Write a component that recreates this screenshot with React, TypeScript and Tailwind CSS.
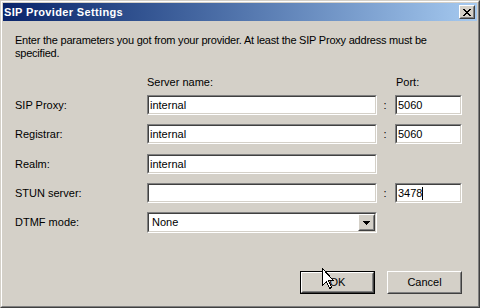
import type { ReactNode } from 'react';

const font = { fontFamily: '"Liberation Sans", Arial, sans-serif' };

function Sunken({ children, className = '' }: { children?: ReactNode; className?: string }) {
  return (
    <div className={`border border-t-[#808080] border-l-[#808080] border-b-white border-r-white ${className}`}>
      <div className="h-full border border-t-[#404040] border-l-[#404040] border-b-[#d4d0c8] border-r-[#d4d0c8] bg-white flex items-center pl-[1px] text-[11px] text-black">
        {children}
      </div>
    </div>
  );
}

function Raised({ children, className = '' }: { children?: ReactNode; className?: string }) {
  return (
    <div className={`border border-t-white border-l-white border-b-[#404040] border-r-[#404040] ${className}`}>
      <div className="h-full border border-t-[#d4d0c8] border-l-[#d4d0c8] border-b-[#808080] border-r-[#808080] bg-[#d4d0c8] flex items-center justify-center">
        {children}
      </div>
    </div>
  );
}

function CloseGlyph() {
  const rows = ['XX....XX', '.XX..XX.', '..XXXX..', '...XX...', '..XXXX..', '.XX..XX.', 'XX....XX'];
  return (
    <svg width="8" height="7" shapeRendering="crispEdges">
      {rows.flatMap((r, y) =>
        r.split('').map((c, x) => (c === 'X' ? <rect key={`${x}-${y}`} x={x} y={y} width="1" height="1" fill="#000" /> : null))
      )}
    </svg>
  );
}

function DownArrow() {
  return (
    <svg width="7" height="4" shapeRendering="crispEdges">
      <rect x="0" y="0" width="7" height="1" fill="#000" />
      <rect x="1" y="1" width="5" height="1" fill="#000" />
      <rect x="2" y="2" width="3" height="1" fill="#000" />
      <rect x="3" y="3" width="1" height="1" fill="#000" />
    </svg>
  );
}

function Row({ label, value, port, caret }: { label: string; value: string; port?: string; caret?: boolean }) {
  return (
    <div className="grid grid-cols-[132px_230px_18px_67px] items-center h-[20px]">
      <span className="text-[11px]">{label}</span>
      <Sunken className="h-[20px]">{value}</Sunken>
      {port !== undefined ? (
        <>
          <span className="text-[11px] text-center pr-[2px]">:</span>
          <Sunken className="h-[20px]">
            {port}
            {caret && <span className="inline-block w-[1px] h-[13px] bg-black" />}
          </Sunken>
        </>
      ) : null}
    </div>
  );
}

export default function App() {
  return (
    <div className="relative w-[480px] h-[308px] bg-[#d4d0c8] text-black" style={font}>
      {/* window frame */}
      <div className="h-full border border-t-[#d4d0c8] border-l-[#d4d0c8] border-b-[#404040] border-r-[#404040]">
        <div className="h-full border border-t-white border-l-white border-b-[#808080] border-r-[#808080] p-[1px] flex flex-col">
          {/* Title bar */}
          <div className="h-[18px] flex items-center justify-between bg-gradient-to-r from-[#0a246a] to-[#a6caf0] pl-[1px] pr-[2px]">
            <span className="text-white text-[11px] font-bold tracking-[0.35px]">SIP Provider Settings</span>
            <Raised className="w-[16px] h-[14px]">
              <CloseGlyph />
            </Raised>
          </div>

          {/* Body */}
          <div className="flex flex-col pl-[12px] pr-[15px]">
            <p className="mt-[13px] text-[11px] leading-[13px] tracking-[-0.22px]">
              Enter the parameters you got from your provider. At least the SIP Proxy address must be
              <br />
              specified.
            </p>

            <div className="mt-[16px] mb-[6px] grid grid-cols-[132px_230px_18px_67px] text-[11px] leading-[13px]">
              <span />
              <span>Server name:</span>
              <span />
              <span className="pl-[1px]">Port:</span>
            </div>

            <div className="flex flex-col gap-[9px]">
              <Row label="SIP Proxy:" value="internal" port="5060" />
              <Row label="Registrar:" value="internal" port="5060" />
              <div className="mt-[1px]">
                <Row label="Realm:" value="internal" />
              </div>
              <Row label="STUN server:" value="" port="3478" caret />
              <div className="grid grid-cols-[132px_230px] items-center h-[21px]">
                <span className="text-[11px]">DTMF mode:</span>
                <Sunken className="h-[21px]">
                  <div className="flex-1 pl-[2px]">None</div>
                  <Raised className="w-[17px] h-[17px]">
                    <DownArrow />
                  </Raised>
                </Sunken>
              </div>
            </div>

            {/* Buttons */}
            <div className="mt-[38px] flex justify-end gap-[12px]">
              <div className="border border-black w-[75px] h-[23px]">
                <Raised className="h-full">
                  <span className="text-[11px]">OK</span>
                </Raised>
              </div>
              <Raised className="w-[75px] h-[23px]">
                <span className="text-[11px]">Cancel</span>
              </Raised>
            </div>
          </div>
        </div>
      </div>

      {/* Mouse pointer over OK */}
      <svg className="absolute left-[322px] top-[268px]" width="13" height="22" shapeRendering="crispEdges">
        <path d="M0.5 0.5 L0.5 17.5 L4.5 13.5 L7.5 20.5 L9.5 19.5 L6.5 12.5 L11.5 12.5 Z" fill="#fff" stroke="#000" strokeWidth="1" />
      </svg>
    </div>
  );
}
